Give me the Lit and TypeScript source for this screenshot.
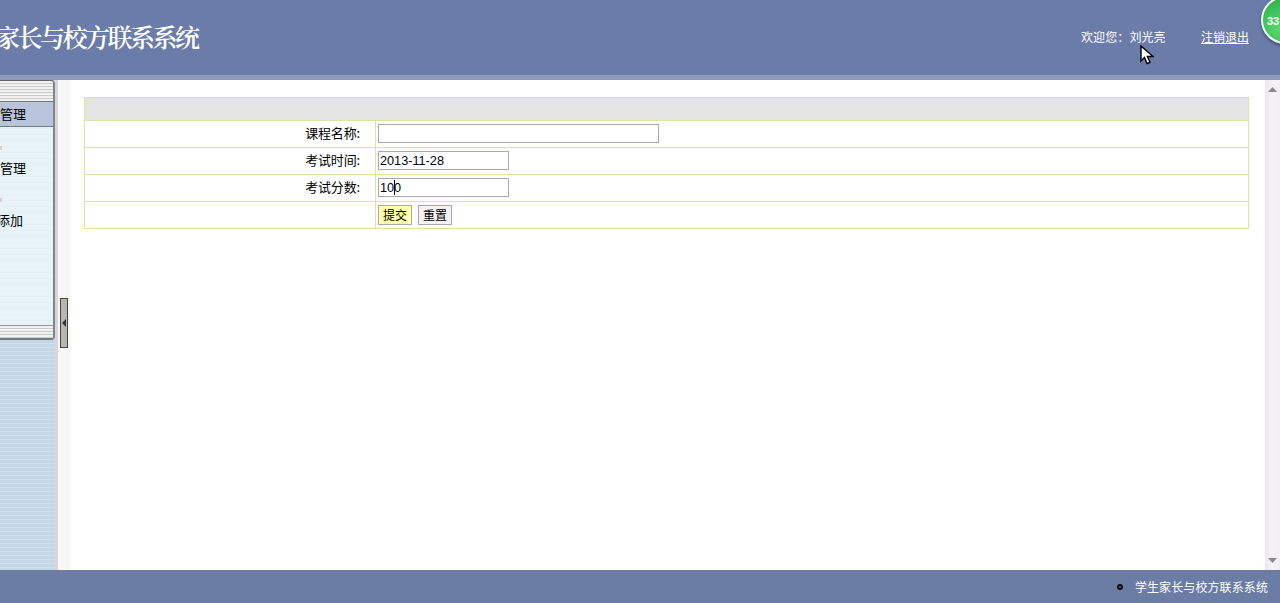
import { LitElement, html, css } from "lit";
import { customElement } from "lit/decorators.js";

@customElement("app-root")
export class AppRoot extends LitElement {
  static styles = css`
    :host { display: flex; flex-direction: column; position: relative; width: 1280px; height: 603px; overflow: hidden; background: #fff;
      font-family: "Noto Sans CJK SC", "Liberation Sans", sans-serif; font-size: 12px; color: #000; }
    .header { height: 75px; flex: none; background: #6b7ca9; border-bottom: 5px solid #8e9ab9; display: flex; align-items: center; color: #fff; position: relative; overflow: hidden; }
    .title { font-size: 25px; font-weight: 600; line-height: 71px; letter-spacing: -2.5px; margin: -2px 0 0 -5px; font-family: "Noto Serif CJK SC", "Noto Sans CJK SC", sans-serif; flex: 1; }
    .welcome { width: 120px; font-size: 12px; line-height: 16px; margin-top: -1px; letter-spacing: .1px; }
    .logout { color: #fff; text-decoration: underline; width: 79px; margin-top: -1px; line-height: 16px; }
    .badge { position: absolute; left: 1261px; top: -4px; height: 44px; border-radius: 50%; border: 2px solid #f4f6f4;
      background: radial-gradient(circle at 40% 70%, #5cd86c, #35b452 70%); box-shadow: 0 2px 3px rgba(30,40,60,.55); color: #fff; font: bold 11px/46px "Liberation Sans", sans-serif; padding-left: 4px; box-sizing: content-box; width: 40px; }
    .main { flex: 1; display: flex; min-height: 0; }
    .side { width: 55px; flex: none; background: repeating-linear-gradient(#c5d7e4 0 3px, #d2dfe9 3px 4px); display: flex; flex-direction: column; }
    .panel { height: 260px; box-sizing: border-box; border-right: 2px solid #80858b; border-bottom: 2px solid #767a80; border-top: 1px solid #666; border-radius: 0 4px 4px 0; display: flex; flex-direction: column; background: repeating-linear-gradient(#e8f3f8 0 5px, #e4f0f5 5px 6px); }
    .stripes { height: 20px; flex: none; background: repeating-linear-gradient(#f2f2f2 0 2px, #cccccc 2px 3px); border-radius: 0 4px 0 0; }
    .stripes.bottom { height: 12px; margin-top: auto; border-radius: 0; border-top: 1px solid #999; }
    .active { height: 24px; flex: none; border-top: 1px solid #777; border-bottom: 1px solid #777; background: #b8c4da; font-size: 13px; line-height: 23px; }
    .item { font-size: 13px; line-height: 18px; position: relative; }
    .item.one { margin-top: 32px; }
    .item.two { margin-top: 34px; margin-left: -3px; }
    .dot { position: absolute; left: 0; top: -13px; width: 2px; height: 4px; background: #e2ccd2; }
    .item.two .dot { left: 3px; }
    .split { width: 3px; flex: none; background: #d8d6dc; }
    .gutter { width: 12px; flex: none; background: #f7f7f7; position: relative; }
    .handle { position: absolute; left: 2px; top: 218px; width: 8px; height: 50px; box-sizing: border-box; border: 1px solid #444; background: #b8b6ae; }
    .handle svg { position: absolute; left: 1px; top: 20px; }
    .content { flex: 1; padding: 17px 16px 0 14px; min-width: 0; }
    table { width: 100%; border-collapse: collapse; table-layout: fixed; }
    td { border: 1px solid #dde3a8; height: 27px; padding: 3px 2px 0; box-sizing: border-box; font-size: 13px; vertical-align: top; }
    .head td { height: 23px; padding: 0; background: #e4e4e4; }
    .label { text-align: right; padding: 0 15px 4px 2px; vertical-align: middle; letter-spacing: -0.15px; }
    .field { display: block; box-sizing: border-box; height: 19px; border: 1px solid #a9a9a9; padding: 0 1px; font: 12.7px "Liberation Sans", sans-serif; color: #00000f; outline: none; background: #fff; }
    .wide { width: 281px; }
    .narrow { width: 131px; }
    .wrap { position: relative; display: block; width: 131px; }
    .caret { position: absolute; left: 16px; top: 2px; width: 1px; height: 15px; background: #000; }
    .buttons { display: flex; gap: 6px; }
    .btn { width: 34px; height: 20px; box-sizing: border-box; border: 1px solid #a9a9a9; background: #f6f1f6; padding: 0 0 4px; font: 12px "Noto Sans CJK SC", sans-serif; color: #000; }
    .btn.yes { background: #ffffb0; }
    .scroll { width: 15px; flex: none; background: linear-gradient(90deg, #ebe8eb, #f5f3f5 50%, #f1eef1); display: flex; flex-direction: column; justify-content: space-between; align-items: center; padding: 7px 0; box-sizing: border-box; }
    .footer { height: 33px; flex: none; background: #6b7ca5; color: #fff; display: flex; align-items: center; justify-content: flex-end; padding-right: 12px; gap: 12px; letter-spacing: .1px; }
    .bullet { width: 6px; height: 6px; border-radius: 50%; box-sizing: border-box; border: 2px solid #111; background: #667; }
    .cursor { position: absolute; left: 1140px; top: 45px; }
  `;

  render() {
    return html`
      <div class="header">
        <div class="title">家长与校方联系系统</div>
        <div class="welcome">欢迎您：刘光亮</div>
        <a class="logout">注销退出</a>
        <div class="badge">33</div>
      </div>
      <div class="main">
        <div class="side">
          <div class="panel">
            <div class="stripes"></div>
            <div class="active">管理</div>
            <div class="item one"><span class="dot"></span>管理</div>
            <div class="item two"><span class="dot"></span>添加</div>
            <div class="stripes bottom"></div>
          </div>
        </div>
        <div class="split"></div>
        <div class="gutter">
          <div class="handle"><svg width="5" height="8" viewBox="0 0 5 8"><path d="M4 0v8L0 4z" fill="#333"/></svg></div>
        </div>
        <div class="content">
          <table>
            <colgroup><col style="width:291px" /><col /></colgroup>
            <tr class="head"><td colspan="2"></td></tr>
            <tr>
              <td class="label">课程名称:</td>
              <td><input class="field wide" /></td>
            </tr>
            <tr>
              <td class="label">考试时间:</td>
              <td><input class="field narrow" value="2013-11-28" /></td>
            </tr>
            <tr>
              <td class="label">考试分数:</td>
              <td><span class="wrap"><input class="field narrow" value="100" /><span class="caret"></span></span></td>
            </tr>
            <tr>
              <td class="label"></td>
              <td><div class="buttons"><button class="btn yes">提交</button><button class="btn">重置</button></div></td>
            </tr>
          </table>
        </div>
        <div class="scroll">
          <svg width="9" height="5" viewBox="0 0 9 5"><path d="M4.5 0L9 5H0z" fill="#8a8a8a"/></svg>
          <svg width="9" height="5" viewBox="0 0 9 5"><path d="M4.5 5L9 0H0z" fill="#8a8a8a"/></svg>
        </div>
      </div>
      <div class="footer"><span class="bullet"></span><span>学生家长与校方联系系统</span></div>
      <svg class="cursor" width="14" height="21" viewBox="0 0 14 21"><path d="M1 1v15l3.5-3.5 2.5 6 3-1.2-2.6-5.8H13z" fill="#fff" stroke="#000" stroke-width="1.4"/></svg>
    `;
  }
}
